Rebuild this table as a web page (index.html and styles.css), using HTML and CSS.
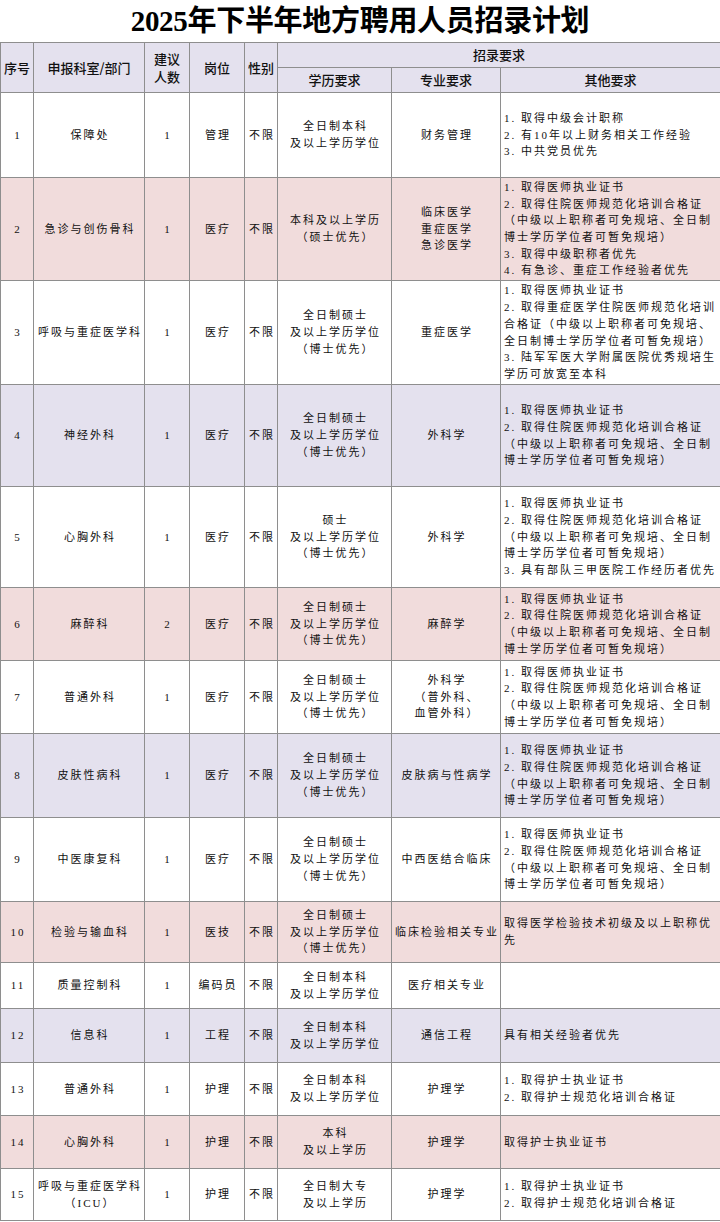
FILE: index.html
```html
<!DOCTYPE html>
<html lang="zh-CN">
<head>
<meta charset="utf-8">
<title>2025年下半年地方聘用人员招录计划</title>
<link rel="stylesheet" href="styles.css">
</head>
<body>
<h1 class="title">2025年下半年地方聘用人员招录计划</h1>
<table class="plan">
  <colgroup>
    <col class="w33"><col class="w111"><col class="w45"><col class="w55"><col class="w33"><col class="w114"><col class="w109"><col class="w220">
  </colgroup>
  <thead>
    <tr class="h25">
      <th rowspan="2">序号</th>
      <th rowspan="2">申报科室/部门</th>
      <th rowspan="2">建议<br>人数</th>
      <th rowspan="2">岗位</th>
      <th rowspan="2">性别</th>
      <th colspan="3">招录要求</th>
    </tr>
    <tr class="h25">
      <th>学历要求</th>
      <th>专业要求</th>
      <th>其他要求</th>
    </tr>
  </thead>
  <tbody>
    <tr class="h85">
      <td>1</td><td>保障处</td><td>1</td><td>管理</td><td>不限</td>
      <td>全日制本科<br>及以上学历学位</td>
      <td>财务管理</td>
      <td class="req">1. 取得中级会计职称<br>2. 有10年以上财务相关工作经验<br>3. 中共党员优先</td>
    </tr>
    <tr class="h103 pink">
      <td>2</td><td>急诊与创伤骨科</td><td>1</td><td>医疗</td><td>不限</td>
      <td>本科及以上学历<br>（硕士优先）</td>
      <td>临床医学<br>重症医学<br>急诊医学</td>
      <td class="req">1. 取得医师执业证书<br>2. 取得住院医师规范化培训合格证<br>（中级以上职称者可免规培、全日制<br>博士学历学位者可暂免规培）<br>3. 取得中级职称者优先<br>4. 有急诊、重症工作经验者优先</td>
    </tr>
    <tr class="h104">
      <td>3</td><td>呼吸与重症医学科</td><td>1</td><td>医疗</td><td>不限</td>
      <td>全日制硕士<br>及以上学历学位<br>（博士优先）</td>
      <td>重症医学</td>
      <td class="req">1. 取得医师执业证书<br>2. 取得重症医学住院医师规范化培训<br>合格证（中级以上职称者可免规培、<br>全日制博士学历学位者可暂免规培）<br>3. 陆军军医大学附属医院优秀规培生<br>学历可放宽至本科</td>
    </tr>
    <tr class="h102 lav">
      <td>4</td><td>神经外科</td><td>1</td><td>医疗</td><td>不限</td>
      <td>全日制硕士<br>及以上学历学位<br>（博士优先）</td>
      <td>外科学</td>
      <td class="req">1. 取得医师执业证书<br>2. 取得住院医师规范化培训合格证<br>（中级以上职称者可免规培、全日制<br>博士学历学位者可暂免规培）</td>
    </tr>
    <tr class="h101">
      <td>5</td><td>心胸外科</td><td>1</td><td>医疗</td><td>不限</td>
      <td>硕士<br>及以上学历学位<br>（博士优先）</td>
      <td>外科学</td>
      <td class="req">1. 取得医师执业证书<br>2. 取得住院医师规范化培训合格证<br>（中级以上职称者可免规培、全日制<br>博士学历学位者可暂免规培）<br>3. 具有部队三甲医院工作经历者优先</td>
    </tr>
    <tr class="h73 pink">
      <td>6</td><td>麻醉科</td><td>2</td><td>医疗</td><td>不限</td>
      <td>全日制硕士<br>及以上学历学位<br>（博士优先）</td>
      <td>麻醉学</td>
      <td class="req">1. 取得医师执业证书<br>2. 取得住院医师规范化培训合格证<br>（中级以上职称者可免规培、全日制<br>博士学历学位者可暂免规培）</td>
    </tr>
    <tr class="h73">
      <td>7</td><td>普通外科</td><td>1</td><td>医疗</td><td>不限</td>
      <td>全日制硕士<br>及以上学历学位<br>（博士优先）</td>
      <td>外科学<br>（普外科、<br>血管外科）</td>
      <td class="req">1. 取得医师执业证书<br>2. 取得住院医师规范化培训合格证<br>（中级以上职称者可免规培、全日制<br>博士学历学位者可暂免规培）</td>
    </tr>
    <tr class="h84 lav">
      <td>8</td><td>皮肤性病科</td><td>1</td><td>医疗</td><td>不限</td>
      <td>全日制硕士<br>及以上学历学位<br>（博士优先）</td>
      <td>皮肤病与性病学</td>
      <td class="req">1. 取得医师执业证书<br>2. 取得住院医师规范化培训合格证<br>（中级以上职称者可免规培、全日制<br>博士学历学位者可暂免规培）</td>
    </tr>
    <tr class="h84">
      <td>9</td><td>中医康复科</td><td>1</td><td>医疗</td><td>不限</td>
      <td>全日制硕士<br>及以上学历学位<br>（博士优先）</td>
      <td>中西医结合临床</td>
      <td class="req">1. 取得医师执业证书<br>2. 取得住院医师规范化培训合格证<br>（中级以上职称者可免规培、全日制<br>博士学历学位者可暂免规培）</td>
    </tr>
    <tr class="h61 pink">
      <td>10</td><td>检验与输血科</td><td>1</td><td>医技</td><td>不限</td>
      <td>全日制硕士<br>及以上学历学位<br>（博士优先）</td>
      <td>临床检验相关专业</td>
      <td class="req">取得医学检验技术初级及以上职称优<br>先</td>
    </tr>
    <tr class="h46">
      <td>11</td><td>质量控制科</td><td>1</td><td>编码员</td><td>不限</td>
      <td>全日制本科<br>及以上学历学位</td>
      <td>医疗相关专业</td>
      <td class="req"></td>
    </tr>
    <tr class="h54 lav">
      <td>12</td><td>信息科</td><td>1</td><td>工程</td><td>不限</td>
      <td>全日制本科<br>及以上学历学位</td>
      <td>通信工程</td>
      <td class="req">具有相关经验者优先</td>
    </tr>
    <tr class="h53">
      <td>13</td><td>普通外科</td><td>1</td><td>护理</td><td>不限</td>
      <td>全日制本科<br>及以上学历学位</td>
      <td>护理学</td>
      <td class="req">1. 取得护士执业证书<br>2. 取得护士规范化培训合格证</td>
    </tr>
    <tr class="h53 pink">
      <td>14</td><td>心胸外科</td><td>1</td><td>护理</td><td>不限</td>
      <td>本科<br>及以上学历</td>
      <td>护理学</td>
      <td class="req">取得护士执业证书</td>
    </tr>
    <tr class="h52">
      <td>15</td><td>呼吸与重症医学科<br>（ICU）</td><td>1</td><td>护理</td><td>不限</td>
      <td>全日制大专<br>及以上学历</td>
      <td>护理学</td>
      <td class="req">1. 取得护士执业证书<br>2. 取得护士规范化培训合格证</td>
    </tr>
  </tbody>
</table>
</body>
</html>
```
FILE: styles.css
```css
html, body {
  margin: 0;
  padding: 0;
  background: #ffffff;
}
body {
  width: 720px;
  font-family: "Liberation Serif", "Noto Sans CJK SC", serif;
  color: #111111;
}
.title {
  margin: 0;
  height: 42px;
  line-height: 42px;
  text-align: center;
  font-size: 29px;
  font-weight: 700;
  color: #000;
  letter-spacing: -0.3px;
}
.plan {
  width: 720px;
  border-collapse: collapse;
  table-layout: fixed;
}
.w33 { width: 33px; }
.w111 { width: 111px; }
.w45 { width: 45px; }
.w55 { width: 55px; }
.w114 { width: 114px; }
.w109 { width: 109px; }
.w220 { width: 220px; }

.plan th,
.plan td {
  border: 1px solid #8e8e8e;
  padding: 0;
  vertical-align: middle;
  text-align: center;
  white-space: nowrap;
  overflow: hidden;
}
.plan th {
  background: #e4e1ee;
  font-family: "Noto Sans CJK SC", sans-serif;
  font-size: 13px;
  font-weight: 500;
  line-height: 18px;
  color: #111;
}
.plan td {
  font-size: 11px;
  letter-spacing: 2px;
  line-height: 16.7px;
  padding-left: 2px;
}
.plan td.req {
  text-align: left;
  padding-left: 3px;
}
.pink td { background: #f1dcdc; }
.lav td { background: #e4e1ee; }

.h25 { height: 25px; }
.h46 { height: 46px; }
.h52 { height: 52px; }
.h53 { height: 53px; }
.h54 { height: 54px; }
.h61 { height: 61px; }
.h73 { height: 73px; }
.h84 { height: 84px; }
.h85 { height: 85px; }
.h101 { height: 101px; }
.h102 { height: 102px; }
.h103 { height: 103px; }
.h104 { height: 104px; }
```
